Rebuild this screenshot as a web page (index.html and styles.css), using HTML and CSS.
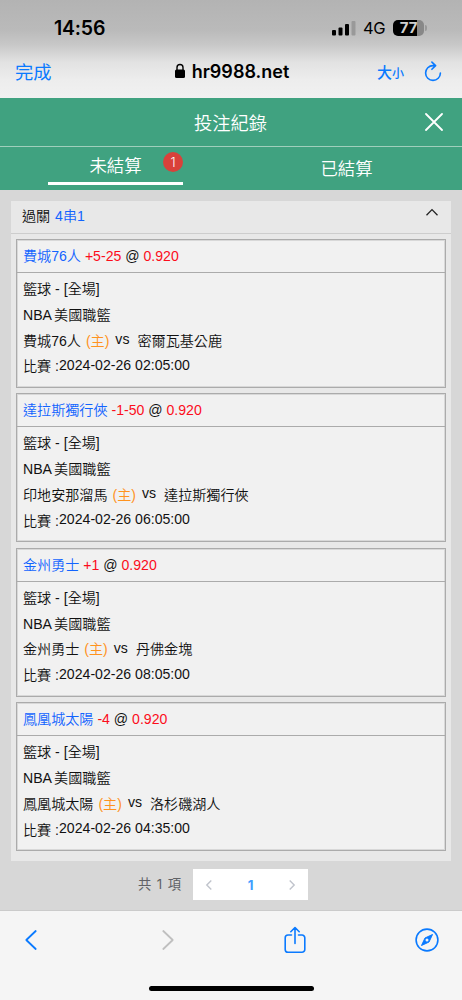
FILE: index.html
```html
<!DOCTYPE html>
<html lang="zh-Hant">
<head>
    <meta charset="UTF-8">
    <meta name="viewport" content="width=device-width, initial-scale=1.0">
    <title>投注紀錄</title>
    <link rel="stylesheet" href="styles.css">
</head>
<body>
    <div class="browser-top">
        <div class="status-bar">
            <span class="clock">14:56</span>
            <div class="status-icons">
                <svg class="signal" width="24" height="16" viewBox="0 0 24 16">
                    <rect x="0" y="10" width="4" height="5.5" rx="1"/>
                    <rect x="6.5" y="7.5" width="4" height="8" rx="1"/>
                    <rect x="13" y="4" width="4" height="11.5" rx="1"/>
                    <rect x="19.5" y="1" width="4" height="14.5" rx="1" fill="#999"/>
                </svg>
                <span class="network">4G</span>
                <div class="battery"><span>77</span></div>
            </div>
        </div>
        <div class="address-bar">
            <span class="done">完成</span>
            <div class="site">
                <svg width="12" height="16" viewBox="0 0 12 16">
                    <rect x="1" y="6.5" width="10" height="8.5" rx="1.5"/>
                    <path d="M3 7.5V4.5a3 3 0 0 1 6 0v3" fill="none" stroke="#000" stroke-width="1.4"/>
                </svg>
                <span>hr9988.net</span>
            </div>
            <div class="address-tools">
                <span class="text-size">大<small>小</small></span>
                <svg width="18" height="22" viewBox="0 0 18 22">
                    <path d="M10.5 4.6H9a7.4 7.4 0 1 0 7.4 7.4M7.9 1.1l3.7 3.5-3.7 3.7" fill="none" stroke="#0a7aff" stroke-width="1.6" stroke-linecap="round" stroke-linejoin="round"/>
                </svg>
            </div>
        </div>
    </div>

    <header class="page-title">
        <h1>投注紀錄</h1>
        <svg class="close" width="18" height="18" viewBox="0 0 18 18">
            <path d="M1 1l16 16M17 1L1 17" stroke="#fff" stroke-width="1.8" stroke-linecap="round"/>
        </svg>
    </header>
    <nav class="tabs">
        <div class="tab active">未結算<span class="badge">1</span></div>
        <div class="tab">已結算</div>
    </nav>

    <main class="content">
        <section class="panel">
            <div class="panel-head">
                <span>過關 <span class="blue parlay">4串1</span></span>
                <svg width="14" height="9" viewBox="0 0 14 9">
                    <path d="M1.5 7.2L7 1.6l5.5 5.6" fill="none" stroke="#222" stroke-width="1.3"/>
                </svg>
            </div>
            <div class="bets">
                <div class="bet">
                    <div class="bet-title"><span class="blue">費城76人</span> <span class="red">+5-25</span> @ <span class="red">0.920</span></div>
                    <div class="bet-body">
                        <div>籃球 - [全場]</div>
                        <div class="league">NBA 美國職籃</div>
                        <div>費城76人 <span class="home">(主)</span><span class="vs">vs</span>密爾瓦基公鹿</div>
                        <div>比賽 :<span class="time">2024-02-26 02:05:00</span></div>
                    </div>
                </div>
                <div class="bet">
                    <div class="bet-title"><span class="blue">達拉斯獨行俠</span> <span class="red">-1-50</span> @ <span class="red">0.920</span></div>
                    <div class="bet-body">
                        <div>籃球 - [全場]</div>
                        <div class="league">NBA 美國職籃</div>
                        <div>印地安那溜馬 <span class="home">(主)</span><span class="vs">vs</span>達拉斯獨行俠</div>
                        <div>比賽 :<span class="time">2024-02-26 06:05:00</span></div>
                    </div>
                </div>
                <div class="bet">
                    <div class="bet-title"><span class="blue">金州勇士</span> <span class="red">+1</span> @ <span class="red">0.920</span></div>
                    <div class="bet-body">
                        <div>籃球 - [全場]</div>
                        <div class="league">NBA 美國職籃</div>
                        <div>金州勇士 <span class="home">(主)</span><span class="vs">vs</span>丹佛金塊</div>
                        <div>比賽 :<span class="time">2024-02-26 08:05:00</span></div>
                    </div>
                </div>
                <div class="bet">
                    <div class="bet-title"><span class="blue">鳳凰城太陽</span> <span class="red">-4</span> @ <span class="red">0.920</span></div>
                    <div class="bet-body">
                        <div>籃球 - [全場]</div>
                        <div class="league">NBA 美國職籃</div>
                        <div>鳳凰城太陽 <span class="home">(主)</span><span class="vs">vs</span>洛杉磯湖人</div>
                        <div>比賽 :<span class="time">2024-02-26 04:35:00</span></div>
                    </div>
                </div>
            </div>
        </section>
        <div class="pagination">
            <span class="total">共 1 項</span>
            <div class="pager">
                <svg width="8" height="12" viewBox="0 0 8 12"><path d="M6.3 1.5L1.8 6l4.5 4.5" fill="none" stroke="#c0c4cc" stroke-width="1.4"/></svg>
                <span>1</span>
                <svg width="8" height="12" viewBox="0 0 8 12"><path d="M1.7 1.5L6.2 6l-4.5 4.5" fill="none" stroke="#c0c4cc" stroke-width="1.4"/></svg>
            </div>
        </div>
    </main>

    <footer class="toolbar">
        <div class="toolbar-icons">
            <svg width="14" height="22" viewBox="0 0 14 22"><path d="M11.7 2L2.3 11l9.4 9" fill="none" stroke="#0a7aff" stroke-width="1.8" stroke-linecap="round" stroke-linejoin="round"/></svg>
            <svg class="forward" width="14" height="22" viewBox="0 0 14 22"><path d="M2.3 2l9.4 9-9.4 9" fill="none" stroke="#bfbfbf" stroke-width="1.8" stroke-linecap="round" stroke-linejoin="round"/></svg>
            <svg width="22" height="28" viewBox="0 0 22 28">
                <path d="M7.5 9H4a2.8 2.8 0 0 0-2.8 2.8v11.6A2.8 2.8 0 0 0 4 26.2h14a2.8 2.8 0 0 0 2.8-2.8V11.8A2.8 2.8 0 0 0 18 9h-3.5M11 17.5V1.8M6.8 5.7L11 1.500l4.2 4.2" fill="none" stroke="#0a7aff" stroke-width="1.6" stroke-linecap="round" stroke-linejoin="round"/>
            </svg>
            <svg width="24" height="24" viewBox="0 0 24 24">
                <circle cx="12" cy="12" r="10.9" fill="none" stroke="#0a7aff" stroke-width="1.6"/>
                <path d="M17.5 6.5l-3.5 7.500-7.500 3.500 3.500-7.500z" fill="#0a7aff" stroke="#0a7aff" stroke-linejoin="round"/>
                <circle cx="12" cy="12" r="1.5" fill="#f5f5f5"/>
            </svg>
        </div>
        <div class="home-bar"></div>
    </footer>
</body>
</html>
```
FILE: styles.css
```css
* {
    box-sizing: border-box;
}
body {
    margin: 0;
    height: 1000px;
    display: flex;
    flex-direction: column;
    overflow: hidden;
    font-family: "Liberation Sans", "Noto Sans CJK TC", sans-serif;
    font-size: 14.1px;
    font-weight: 350;
    color: #111;
    background-color: #d7d7d7;
}
svg {
    display: block;
    flex: none;
}
.blue {
    color: #1264ff;
}
.red {
    color: #fc0d1b;
}

/* browser bars */
.browser-top {
    height: 98px;
    flex: none;
    background: linear-gradient(#b3b3b3 0, #bababa 30px, #c8c8c8 45px, #e2e2e2 62px, #ededed 80px, #f1f1f1 98px);
    font-family: Inter, "Noto Sans CJK TC", sans-serif;
    color: #000;
}
.status-bar {
    height: 54px;
    padding: 2px 38px 0 54px;
    display: flex;
    align-items: center;
    justify-content: space-between;
}
.clock {
    font-size: 19.5px;
    font-weight: 600;
    letter-spacing: -0.2px;
}
.status-icons {
    display: flex;
    align-items: center;
}
.network {
    margin: 0 8px 0 7px;
    font-size: 16.5px;
    font-weight: 400;
    letter-spacing: -0.5px;
}
.battery {
    position: relative;
    width: 31px;
    height: 16px;
    border-radius: 5px;
    background: linear-gradient(90deg, #000 77%, #888 77%);
    color: #d0d0d0;
    font-size: 15px;
    font-weight: 700;
    line-height: 16px;
    text-align: center;
}
.battery::after {
    content: "";
    position: absolute;
    left: 32px;
    top: 5px;
    width: 2px;
    height: 6px;
    border-radius: 0 2px 2px 0;
    background: #999;
}
.address-bar {
    height: 36px;
    padding: 0 20px 0 15px;
    display: grid;
    grid-template-columns: 72px 1fr 66px;
    align-items: center;
}
.done {
    color: #0a7aff;
    font-size: 18.3px;
    font-weight: 400;
    line-height: 24px;
}
.site {
    display: flex;
    align-items: center;
    justify-content: center;
    gap: 6px;
    padding-bottom: 2px;
    font-size: 18px;
    font-weight: 600;
}
.address-tools {
    display: flex;
    align-items: center;
    justify-content: flex-end;
    gap: 20px;
    padding-bottom: 1px;
    color: #0a7aff;
}
.text-size {
    font-size: 15px;
    font-weight: 500;
    white-space: nowrap;
}
.text-size small {
    font-size: 12px;
}

/* title and tabs */
.page-title {
    height: 49px;
    flex: none;
    display: grid;
    grid-template-columns: 1fr auto 1fr;
    align-items: center;
    padding: 0 19px;
    background-color: #40a280;
    border-bottom: 1px solid #a0cfbc;
    color: #fff;
}
.page-title h1 {
    grid-column: 2;
    margin: 0;
    padding: 0 1px 1px 0;
    font-size: 18.3px;
    font-weight: 350;
}
.close {
    justify-self: end;
}
.tabs {
    height: 43px;
    flex: none;
    display: grid;
    grid-template-columns: 1fr 1fr;
    justify-items: center;
    background-color: #40a280;
    color: #fff;
    font-size: 17.4px;
}
.tab {
    position: relative;
    width: 135px;
    height: 38px;
    line-height: 44px;
    text-align: center;
}
.tab.active {
    line-height: 38px;
    border-bottom: 3px solid #fff;
}
.badge {
    position: absolute;
    right: 0;
    top: 5px;
    width: 20px;
    height: 20px;
    border-radius: 50%;
    background-color: #d9413a;
    font-family: Inter, sans-serif;
    font-size: 13px;
    line-height: 20px;
}

/* bet list */
.content {
    height: 721px;
    flex: none;
    padding: 11px 11px 0;
    border-bottom: 1px solid #cbcbcb;
}
.panel {
    height: 660px;
    background-color: #e8e8e8;
}
.panel-head {
    height: 33px;
    padding: 0 12px 3px 11px;
    display: flex;
    align-items: center;
    justify-content: space-between;
    border-bottom: 1px solid #cdcdcd;
}
.parlay {
    margin-left: 1px;
}
.panel-head > span {
    padding-bottom: 2px;
}
.panel-head svg {
    margin-bottom: 7px;
}
.bets {
    padding: 5px 5px 0;
    display: flex;
    flex-direction: column;
    gap: 5.4px;
}
.bet {
    height: 149px;
    border: 1px solid #ababab;
    background-color: #f1f1f1;
    box-shadow: inset 0 0 0 1px #d8d8d8;
}
.bet-title {
    height: 33px;
    padding: 0 6px;
    line-height: 32px;
    border-bottom: 1px solid #ababab;
}
.bet-body {
    padding: 4px 6px 0;
    line-height: 25.8px;
}
.bet-body div {
    height: 25.8px;
    white-space: nowrap;
}
.bet-body .league {
    word-spacing: -1px;
}
.home {
    margin-left: 1px;
    color: #ff931e;
}
.vs,
.time {
    position: relative;
    top: -1.5px;
}
.vs {
    margin: 0 8px 0 6px;
}

/* pagination */
.pagination {
    height: 47px;
    display: flex;
    align-items: center;
    padding-left: 127px;
    font-family: Inter, "Noto Sans CJK TC", sans-serif;
    font-size: 13.3px;
    font-weight: 400;
    color: #606266;
}
.total {
    width: 55px;
    padding-bottom: 2px;
    white-space: nowrap;
    letter-spacing: 0.9px;
}
.pager {
    width: 115px;
    height: 31px;
    padding: 0 12px;
    display: flex;
    align-items: center;
    justify-content: space-between;
    background-color: #fff;
}
.pager span {
    color: #409eff;
    font-weight: 700;
}

.toolbar {
    flex: 1;
    background-color: #f5f5f5;
}
.toolbar-icons {
    height: 57px;
    padding: 0 23px 0 24px;
    display: flex;
    align-items: center;
    justify-content: space-between;
}
.forward {
    margin-left: 14px;
}
.home-bar {
    width: 165px;
    height: 5px;
    margin: 18px auto 0;
    border-radius: 3px;
    background-color: #000;
}
```
